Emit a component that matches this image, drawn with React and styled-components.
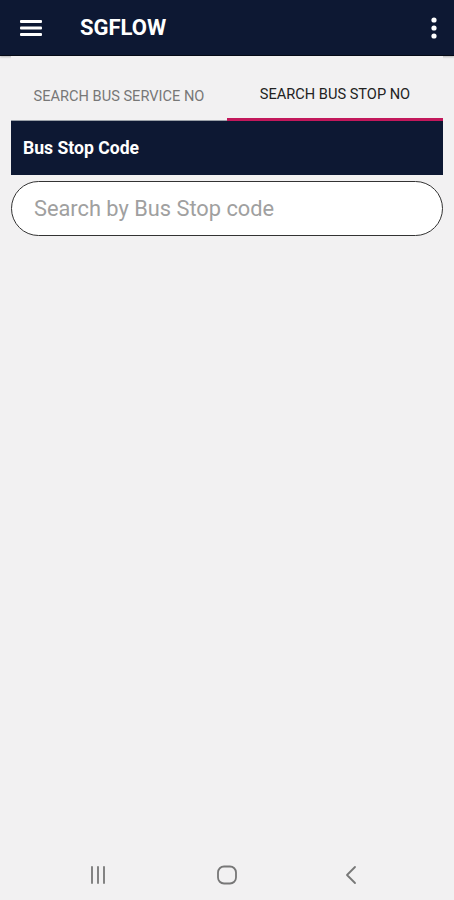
import React from "react";
import styled, { createGlobalStyle } from "styled-components";

const GlobalStyle = createGlobalStyle`
  html, body {
    margin: 0;
    padding: 0;
    background: #f2f1f2;
  }
  body {
    font-family: Roboto, "Liberation Sans", Arial, sans-serif;
  }
`;

/* =========================
   styled-components
   ========================= */
const Screen = styled.div`
  width: 454px;
  height: 900px;
  display: flex;
  flex-direction: column;
  background: #f2f1f2;
  overflow: hidden;
`;

const AppBar = styled.header`
  height: 55px;
  flex: none;
  background: #0d1833;
  border-bottom: 1px solid #050a16;
  box-shadow: 0 1px 2px rgba(0, 0, 0, 0.25);
  display: flex;
  align-items: center;
  padding: 0 14px 0 19px;
  color: #fff;
`;

const IconButton = styled.button`
  border: 0;
  background: none;
  padding: 0;
  color: #fff;
  display: grid;
  place-items: center;
  width: ${(p) => p.$w || 24}px;
  height: 24px;
`;

const Title = styled.h1`
  margin: 0 0 0 37px;
  font-size: 22px;
  font-weight: 700;
  flex: 1;
`;

const Content = styled.main`
  flex: 1;
  padding: 0 11px;
  display: flex;
  flex-direction: column;
`;

const Tabs = styled.nav`
  display: grid;
  grid-template-columns: 1fr 1fr;
  height: 65px;
  background: #f2f1f2;
`;

const Tab = styled.div`
  display: flex;
  align-items: center;
  justify-content: center;
  padding-top: ${(p) => (p.$active ? "13px" : "15px")};
  font-size: 14.6px;
  font-weight: 400;
  text-transform: uppercase;
  color: ${(p) => (p.$active ? "#222" : "#777")};
  border-bottom: ${(p) => (p.$active ? "3px solid #c2185b" : "1px solid #9aa0a8")};
`;

const SectionHeader = styled.div`
  height: 54px;
  background: #0d1833;
  color: #fff;
  display: flex;
  align-items: center;
  padding: 0 12px;
  font-size: 17.6px;
  font-weight: 700;
`;

const SearchInput = styled.input`
  margin-top: 6px;
  height: 55px;
  box-sizing: border-box;
  border: 1px solid #333;
  border-radius: 28px;
  background: #fff;
  padding: 0 22px;
  font-family: inherit;
  font-size: 21.8px;
  color: #222;
  outline: none;

  &::placeholder {
    color: #a0a0a0;
  }
`;

const NavBar = styled.footer`
  height: 50px;
  flex: none;
  display: grid;
  grid-template-columns: 196px 62px 196px;
  align-items: center;
  justify-items: center;
  color: #777;
`;

const NavSlot = styled.div`
  display: grid;
  place-items: center;
  justify-self: ${(p) => p.$align || "center"};
  margin: ${(p) => p.$margin || "0"};
`;

/* =========================
   icons
   ========================= */
const MenuIcon = () => (
  <svg width="22" height="18" viewBox="0 0 22 18">
    <rect x="0" y="1" width="22" height="3" rx="1" fill="currentColor" />
    <rect x="0" y="7.5" width="22" height="3" rx="1" fill="currentColor" />
    <rect x="0" y="14" width="22" height="3" rx="1" fill="currentColor" />
  </svg>
);

const MoreIcon = () => (
  <svg width="6" height="22" viewBox="0 0 6 22">
    <circle cx="3" cy="3" r="2.6" fill="currentColor" />
    <circle cx="3" cy="11" r="2.6" fill="currentColor" />
    <circle cx="3" cy="19" r="2.6" fill="currentColor" />
  </svg>
);

const RecentsIcon = () => (
  <svg width="18" height="20" viewBox="0 0 18 20">
    <g stroke="currentColor" strokeWidth="1.8" strokeLinecap="round">
      <line x1="3" y1="2" x2="3" y2="18" />
      <line x1="9" y1="2" x2="9" y2="18" />
      <line x1="15" y1="2" x2="15" y2="18" />
    </g>
  </svg>
);

const HomeIcon = () => (
  <svg width="22" height="20" viewBox="0 0 22 20">
    <rect x="2" y="1.5" width="18" height="17" rx="6" fill="none" stroke="currentColor" strokeWidth="1.8" />
  </svg>
);

const BackIcon = () => (
  <svg width="14" height="20" viewBox="0 0 14 20">
    <polyline points="11,2 3,10 11,18" fill="none" stroke="currentColor" strokeWidth="1.8" strokeLinecap="round" strokeLinejoin="round" />
  </svg>
);

/* =========================
   component
   ========================= */
export default function App() {
  return (
    <>
      <GlobalStyle />
      <Screen>
        <AppBar>
          <IconButton $w={24} aria-label="menu">
            <MenuIcon />
          </IconButton>
          <Title>SGFLOW</Title>
          <IconButton $w={12} aria-label="more">
            <MoreIcon />
          </IconButton>
        </AppBar>

        <Content>
          <Tabs>
            <Tab>Search bus service no</Tab>
            <Tab $active>Search bus stop no</Tab>
          </Tabs>

          <SectionHeader>Bus Stop Code</SectionHeader>

          <SearchInput placeholder="Search by Bus Stop code" />
        </Content>

        <NavBar>
          <NavSlot $align="end" $margin="0 89px 0 0">
            <RecentsIcon />
          </NavSlot>
          <NavSlot>
            <HomeIcon />
          </NavSlot>
          <NavSlot $align="start" $margin="0 0 0 86px">
            <BackIcon />
          </NavSlot>
        </NavBar>
      </Screen>
    </>
  );
}
